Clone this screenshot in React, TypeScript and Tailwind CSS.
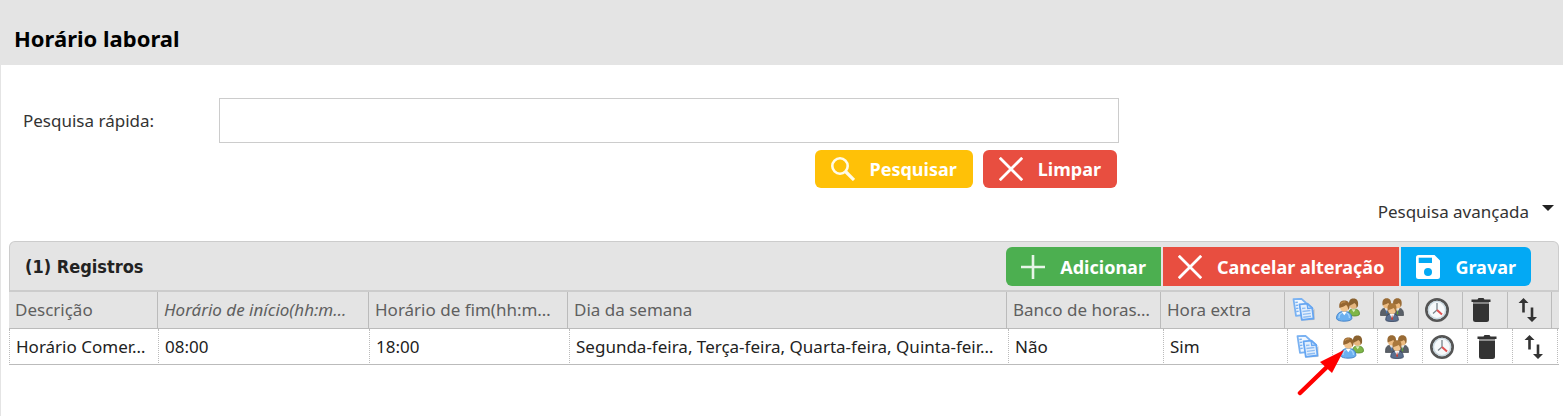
import type { ReactNode } from 'react';

function CopyIcon() {
  return (
    <svg width="24" height="24" viewBox="-1 0 24 24" aria-hidden="true">
      <path d="M9 22.500l13.500-.5L22.500 11z" fill="#000" opacity=".18" />
      <path d="M1.500 1.200L9.500.8l4 3.700 1.500 12-11 1.400z" fill="#f2f8ff" stroke="#7ab2f2" strokeWidth="1.800" strokeLinejoin="round" />
      <path d="M3.300 4.500l2.500-.2M3.600 7.500l2.500-.2M3.900 10.500l2.500-.2M4.200 13.500l2.500-.2" stroke="#7ab2f2" strokeWidth="1.400" />
      <path d="M7.500 6.300l8-.7 4.700 4.400 1.300 10.500-11.700 1.400z" fill="#e3effd" stroke="#66a6f2" strokeWidth="1.800" strokeLinejoin="round" />
      <path d="M15 5.800l.7 4.700 4.500-.5z" fill="#b3d4fa" stroke="#66a6f2" strokeWidth="1.200" />
      <path d="M10 10.500l3.500-.4M10.400 13.500l8-1M10.800 16.400l8-1M11.200 19.200l7.800-1" stroke="#8fbdf2" strokeWidth="1.400" />
    </svg>
  );
}

function UsersIcon() {
  return (
    <svg width="24" height="24" viewBox="0 0 24 24" aria-hidden="true">
      <path d="M12.500 17c0-5 2-6 5.500-6s5.500 1.500 5.500 5c0 1.400-2.500 2-5.500 2z" fill="#7eb648" stroke="#56892c" strokeWidth=".8" />
      <path d="M15.500 11.200l2.200 3 2-3z" fill="#d9edbf" />
      <circle cx="17.500" cy="6.800" r="4" fill="#e5b57e" />
      <path d="M13.200 8C12.400 3 13.800.4 17.400.4c3.800 0 5.300 2.500 4.600 7.600l-1.500 2c.2-2.600-.6-4.400-2.300-5-1.600 1.500-3 1.600-5 3z" fill="#8a6230" />
      <path d="M.6 20.800C.4 16 3 13.500 8.200 13.500s7.800 2.500 7.600 7.300c-1.200 3.200-14 3.200-15.200 0z" fill="#6bb0f0" stroke="#3a7cc5" strokeWidth=".9" />
      <path d="M3 20c0-3 1-4.500 3-5M13.400 20c0-3-1-4.500-3-5" fill="none" stroke="#a8d5fa" strokeWidth="1.200" />
      <path d="M5.600 13.800l2.700 3.500 2.600-3.500z" fill="#fff" />
      <circle cx="8.400" cy="9.500" r="4.300" fill="#f0c38d" />
      <path d="M3.400 10C2.600 5 4.600 2.500 8.400 2.500s6 2.600 5 7.500l-1.400 2c.2-2.600-.5-4-2-5-2 1.800-3.600 1.800-6.600 3z" fill="#966631" />
      <path d="M5 5.600c1-1.600 2.600-2 4.500-1.600" fill="none" stroke="#c08c4c" strokeWidth="1.200" />
    </svg>
  );
}

function GroupIcon() {
  return (
    <svg width="24" height="24" viewBox="0 0 24 24" aria-hidden="true">
      <path d="M.5 17.500C.3 12 2 10 6.500 10s5.500 3 5.500 7.500zM12 17.500c0-4.500 1-7.500 5.500-7.500s6.200 2 6 7.500z" fill="#5a6068" stroke="#42474f" strokeWidth=".7" />
      <path d="M4.500 10l2.200 4 2-4zM15.300 10l2.200 4 2.200-4z" fill="#eef0f3" />
      <path d="M17.500 11.200l.8 5h-1.600z" fill="#5da532" />
      <path d="M6.600 11.200l.8 4H5.900z" fill="#3e70b5" />
      <circle cx="6.700" cy="6.700" r="3.700" fill="#edbc82" />
      <circle cx="17.400" cy="6.700" r="3.700" fill="#edbc82" />
      <path d="M2.600 7.500C1.800 2.500 3.500.3 6.700.3s5 2.200 4.100 7.200L9.700 9c0-2-.5-3.300-1.500-4-1.700 1.400-3.200 1.300-5.600 2.500z" fill="#996b35" />
      <path d="M13.300 7.500C12.400 2.500 14.200.3 17.400.3s5 2.200 4.100 7.200L20.400 9c0-2-.5-3.300-1.500-4-1.700 1.400-3.200 1.300-5.600 2.500z" fill="#996b35" />
      <path d="M5.800 22.300C5.600 18 7.500 15.800 12 15.800s6.500 2.200 6.300 6.500c-1 1.600-11.500 1.600-12.500 0z" fill="#5b6f8f" stroke="#33415c" strokeWidth=".8" />
      <path d="M9.500 15.800l2.600 5 2.500-5z" fill="#f5f6f8" />
      <path d="M12.100 16.800l1 4.200-1 1.300-1-1.300z" fill="#cb3b2c" />
      <circle cx="12" cy="12" r="3.900" fill="#f1c48e" />
      <path d="M7.700 12.500C6.900 7.500 8.700 5.200 12 5.200s5.200 2.300 4.300 7.300l-1.200 1.500c0-2-.5-3.300-1.600-4-1.700 1.400-3.300 1.300-5.800 2.500z" fill="#aa783c" />
    </svg>
  );
}

function ClockIcon() {
  return (
    <svg width="24" height="24" viewBox="0 0 24 24" aria-hidden="true">
      <circle cx="12" cy="12" r="10.600" fill="#f6f9fb" stroke="#555" strokeWidth="2.800" />
      <circle cx="12" cy="12" r="8.600" fill="none" stroke="#c9d8e0" strokeWidth="1.400" />
      <path d="M12 5V12l-4 3.500" fill="none" stroke="#79858c" strokeWidth="1.300" />
      <path d="M12 12l5 4.500" stroke="#e05252" strokeWidth="2" />
    </svg>
  );
}

function TrashIcon() {
  return (
    <svg width="24" height="24" viewBox="0 0 24 24" fill="#333" aria-hidden="true">
      <path d="M2.500 1.500h6L9.500 0h5l1 1.500h6V4h-19z" />
      <path d="M4 4h16v2H4z" opacity=".55" />
      <path d="M4 6h16v15.500a2.500 2.500 0 0 1-2.500 2.500h-11A2.500 2.500 0 0 1 4 21.500z" />
    </svg>
  );
}

function SortIcon() {
  return (
    <svg width="24" height="24" viewBox="0 0 24 24" fill="#333" aria-hidden="true">
      <path d="M9.500 0l5 5h-3.700v9.500H8.200V5H4.500zM18 24l-5-5h3.700V9.500h2.600V19H23z" />
    </svg>
  );
}

function XIcon() {
  return (
    <svg width="24" height="24" viewBox="0 0 24 24" fill="none" stroke="#fff" strokeWidth="2.800" aria-hidden="true">
      <path d="M.8.8l22.400 22.400M23.200.8L.8 23.200" />
    </svg>
  );
}

function SearchIcon() {
  return (
    <svg width="24" height="24" viewBox="0 0 24 24" fill="none" stroke="#fffbe8" aria-hidden="true">
      <circle cx="9" cy="9" r="7.700" strokeWidth="2.600" />
      <path d="M14.500 14.500l8.500 8.500" strokeWidth="3.200" />
    </svg>
  );
}

function PlusIcon() {
  return (
    <svg width="24" height="24" viewBox="0 0 24 24" fill="none" stroke="#e6f5e7" strokeWidth="2.600" aria-hidden="true">
      <path d="M12 0v24M0 12h24" />
    </svg>
  );
}

function SaveIcon() {
  return (
    <svg width="24" height="24" viewBox="0 0 24 24" aria-hidden="true">
      <path d="M2.500 0h16L24 5.500v16a2.500 2.500 0 0 1-2.500 2.500h-19A2.500 2.500 0 0 1 0 21.500v-19A2.500 2.500 0 0 1 2.500 0z" fill="#fff" />
      <path d="M2.700 2.700H16V8H2.700z" fill="#03a9f4" />
      <circle cx="12" cy="17" r="4" fill="#03a9f4" />
    </svg>
  );
}

interface ActionButtonProps {
  icon: ReactNode;
  label: string;
  className: string;
}

function ActionButton({ icon, label, className }: ActionButtonProps) {
  return (
    <button type="button" className={`flex items-center whitespace-nowrap text-lg font-bold text-white ${className}`}>
      {icon}
      {label}
    </button>
  );
}

const actions = [
  { label: 'Copiar', icon: <CopyIcon /> },
  { label: 'Utilizadores', icon: <UsersIcon /> },
  { label: 'Grupos', icon: <GroupIcon /> },
  { label: 'Horas', icon: <ClockIcon /> },
  { label: 'Eliminar', icon: <TrashIcon /> },
  { label: 'Ordenar', icon: <SortIcon /> },
];

const headers = ['Descrição', 'Horário de início(hh:m…', 'Horário de fim(hh:m…', 'Dia da semana', 'Banco de horas…', 'Hora extra'];

const record = ['Horário Comer…', '08:00', '18:00', 'Segunda-feira, Terça-feira, Quarta-feira, Quinta-feir…', 'Não', 'Sim'];

export default function App() {
  return (
    <div className="min-h-screen border-l border-[#e4e4e4] bg-white font-['Noto_Sans','Open_Sans',sans-serif] text-[17px] text-[#333]">
      <header className="-ml-px bg-[#e4e4e4] px-[14px] pt-[23px] pb-3">
        <h1 className="text-[22px] leading-[30px] font-bold text-black">Horário laboral</h1>
      </header>

      <main className="pt-[33px] pr-1 pl-2">
        <form className="flex" onSubmit={(e) => e.preventDefault()}>
          <label htmlFor="quick-search" className="w-[210px] shrink-0 pl-[14px] leading-[45px]">
            Pesquisa rápida:
          </label>
          <div className="w-full max-w-[900px]">
            <input id="quick-search" type="text" className="block h-[45px] w-full border border-[#ccc] bg-white px-3 outline-none" />
            <div className="mt-[7px] flex justify-end gap-[10px] pr-[2px]">
              <ActionButton icon={<SearchIcon />} label="Pesquisar" className="h-[38px] gap-[15px] rounded-md bg-[#ffc107] px-4" />
              <ActionButton icon={<XIcon />} label="Limpar" className="h-[38px] gap-[15px] rounded-md bg-[#e84e40] px-4" />
            </div>
          </div>
        </form>

        <div className="flex justify-end pt-3 pr-[5px]">
          <button type="button" className="flex items-center gap-[13px] leading-6">
            Pesquisa avançada
            <svg width="12" height="6" viewBox="0 0 12 6" className="mb-2" aria-hidden="true">
              <path d="M0 0h12L6 6z" fill="#222" />
            </svg>
          </button>
        </div>

        <section className="mt-[17px]">
          <div className="flex h-[51px] items-start justify-between rounded-t-md border border-b-2 border-[#ccc] bg-[#e4e4e4] pt-[5px] pr-[27px] pl-[15px]">
            <h2 className="font-['DejaVu_Sans_Condensed','DejaVu_Sans',sans-serif] text-lg leading-[39px] font-bold text-[#222]">(1) Registros</h2>
            <div className="flex gap-[2px]">
              <ActionButton icon={<PlusIcon />} label="Adicionar" className="h-[39px] gap-[15px] rounded-l-md bg-[#4caf50] px-[15px]" />
              <ActionButton icon={<XIcon />} label="Cancelar alteração" className="h-[39px] gap-[15px] bg-[#e84e40] px-[15px]" />
              <ActionButton icon={<SaveIcon />} label="Gravar" className="h-[39px] gap-[15px] rounded-r-md bg-[#03a9f4] px-[15px]" />
            </div>
          </div>

          <table className="w-full table-fixed border-separate border-spacing-0 bg-[#e4e4e4] text-[#5f5f5f]">
            <colgroup>
              <col className="w-[149px]" />
              <col className="w-[211px]" />
              <col className="w-[199px]" />
              <col />
              <col className="w-[154px]" />
              <col className="w-[124px]" />
              {actions.map((action, i) => (
                <col key={action.label} className={i % 2 === 0 ? 'w-[45px]' : 'w-[44px]'} />
              ))}
              <col className="w-[7px]" />
            </colgroup>
            <thead>
              <tr>
                {headers.map((header, i) => (
                  <th
                    key={header}
                    scope="col"
                    className={`h-[37px] border-r border-b border-[#bbb] pl-[6px] text-left leading-6 font-normal whitespace-nowrap ${i === 1 ? 'italic' : ''}`}
                  >
                    {header}
                  </th>
                ))}
                {actions.map((action) => (
                  <th key={action.label} scope="col" aria-label={action.label} className="h-[37px] border-r border-b border-[#bbb] pl-[6px]">
                    {action.icon}
                  </th>
                ))}
                <td className="border-b border-[#bbb]" />
              </tr>
            </thead>
          </table>

          <table className="w-full table-fixed border-separate border-spacing-0 text-[#222]" aria-label="Registros">
            <colgroup>
              <col className="w-[149px]" />
              <col className="w-[211px]" />
              <col className="w-[200px]" />
              <col />
              <col className="w-[155px]" />
              <col className="w-[124px]" />
              {actions.map((action) => (
                <col key={action.label} className="w-[45px]" />
              ))}
              <col className="w-[2px]" />
            </colgroup>
            <tbody>
              <tr>
                {record.map((value) => (
                  <td key={value} className="h-9 border-b border-l border-[#bbb] pl-[6px] leading-6 whitespace-nowrap [border-left-style:dotted]">
                    {value}
                  </td>
                ))}
                {actions.map((action) => (
                  <td key={action.label} className="relative h-9 border-b border-l border-[#bbb] pl-[7px] [border-left-style:dotted]">
                    <button type="button" aria-label={action.label} className="block">
                      {action.icon}
                    </button>
                    {action.label === 'Utilizadores' && (
                      <svg width="54" height="50" viewBox="0 0 54 50" className="pointer-events-none absolute top-5 -left-9 z-10" aria-hidden="true">
                        <path d="M3 44L32 16" stroke="#f00" strokeWidth="4.500" strokeLinecap="round" />
                        <path d="M47 1L23 13l12 11z" fill="#f00" />
                      </svg>
                    )}
                  </td>
                ))}
                <td className="border-b border-l border-[#bbb] [border-left-style:dotted]" />
              </tr>
            </tbody>
          </table>
        </section>
      </main>
    </div>
  );
}
